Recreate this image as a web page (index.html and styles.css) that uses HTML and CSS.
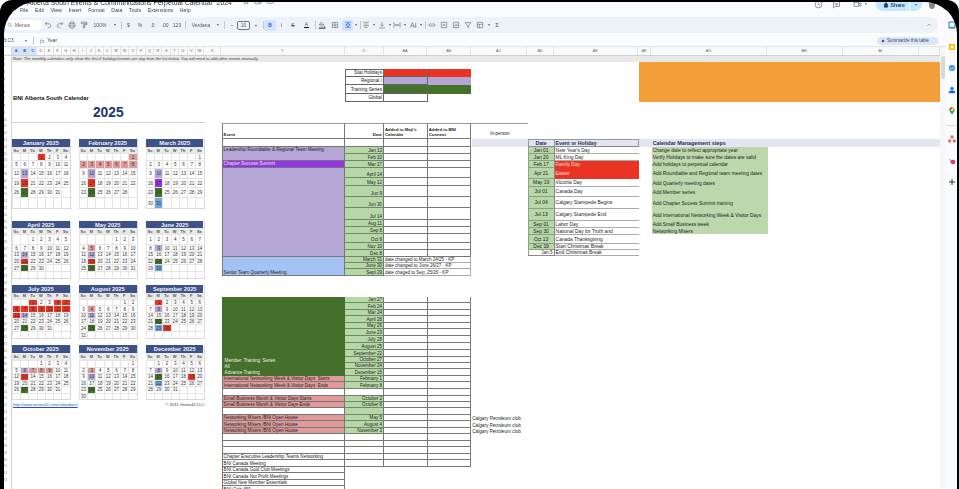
FILE: index.html
```html
<!DOCTYPE html>
<html lang="en">
<head>
<meta charset="utf-8">
<title>Alberta South Events &amp; Communications Perpetual Calendar 2024</title>
<link rel="stylesheet" href="styles.css">
</head>
<body>
<div class="screen">
<div class="app">
  <div class="workspace">
    <header class="top">
      <div class="top-left">
        <div class="doc-title">
          <span class="doc-name">Alberta South Events &amp; Communications Perpetual Calendar&nbsp; 2024</span>
          <svg class="ti" viewBox="0 0 24 24"><path d="M12 3l3 6 6 1-4.500 4.500 1 6.500-5.500-3-5.500 3 1-6.500L3 10l6-1z"/></svg>
          <svg class="ti" viewBox="0 0 24 24"><path d="M3 7h7l2 2h9v11H3zM12 15h5M15 12l3 3-3 3"/></svg>
          <svg class="ti" viewBox="0 0 24 24"><path d="M7 19a5 5 0 0 1 0-10 6 6 0 0 1 11 1 4.500 4.500 0 0 1 0 9z"/></svg>
        </div>
        <nav class="menus"><span>File</span><span>Edit</span><span>View</span><span>Insert</span><span>Format</span><span>Data</span><span>Tools</span><span>Extensions</span><span>Help</span></nav>
      </div>
      <div class="top-right">
        <svg class="ti big" viewBox="0 0 24 24"><circle cx="12" cy="12" r="9"/><path d="M12 7v5l4 2"/></svg>
        <svg class="ti big wider" viewBox="0 0 24 24"><path d="M4 4h16v13H9l-5 4zM8 9h8M8 13h8"/></svg>
        <svg class="ti big meet" viewBox="0 0 24 24"><path d="M3 7h12v10H3zM15 11l6-4v10l-6-4"/></svg>
        <i class="caret"></i>
        <div class="share">
          <svg class="lock" viewBox="0 0 24 24"><path d="M5 10h14v11H5zM8 10V7a4 4 0 0 1 8 0v3"/></svg>
          <span class="share-label">Share</span><i class="share-div"></i><i class="caret"></i>
        </div>
        <i class="avatar"></i>
      </div>
    </header>

    <div class="toolbar">
      <div class="search"><svg class="ti" viewBox="0 0 24 24"><circle cx="10" cy="10" r="6"/><path d="M15 15l6 6"/></svg><span>Menus</span></div>
      <span class="t w12"><svg class="ti" viewBox="0 0 24 24"><path d="M9 13L4 8l5-5M4 8h10a6 6 0 0 1 0 12h-3"/></svg></span>
      <span class="t w12"><svg class="ti" viewBox="0 0 24 24"><path d="M15 13l5-5-5-5M20 8H10a6 6 0 0 0 0 12h3"/></svg></span>
      <span class="t w12"><svg class="ti" viewBox="0 0 24 24"><path d="M7 8V3h10v5M7 17H3V8h18v9h-4M7 13h10v8H7z"/></svg></span>
      <span class="t w11"><svg class="ti" viewBox="0 0 24 24"><path d="M4 3h14v5H4zM18 5h3v6h-9v3M10 14h4v7h-4z"/></svg></span>
      <span class="t w22">100%</span><span class="t w8"><i class="caret"></i></span>
      <span class="t w4"><i class="sep"></i></span>
      <span class="t w11">$</span><span class="t w12">%</span><span class="t w13">.0</span><span class="t w12">.00</span><span class="t w12">123</span>
      <span class="t w4"><i class="sep"></i></span>
      <span class="t w28">Verdana</span><span class="t w6"><i class="caret"></i></span>
      <span class="t w6"><i class="sep"></i></span>
      <span class="t w10">−</span><span class="t w13"><span class="size">10</span></span><span class="t w12">+</span>
      <span class="t w2"><i class="sep"></i></span>
      <span class="t w12 on"><b>B</b></span><span class="t w11"><em>I</em></span><span class="t w12"><s>S</s></span><span class="t w15"><span class="color-a">A</span></span>
      <span class="t w2"><i class="sep"></i></span>
      <span class="t w12"><svg class="ti" viewBox="0 0 24 24"><path d="M10 3l8 8-7 7-7-7zM4 11h14M20 15l1.500 3a1.500 1.500 0 1 1-3 0z"/><path class="ink" d="M2 20h20v3H2z"/></svg></span>
      <span class="t w14"><svg class="ti" viewBox="0 0 24 24"><path d="M4 4h16v16H4zM12 4v16M4 12h16"/></svg></span>
      <span class="t w11 on"><svg class="ti blue" viewBox="0 0 24 24"><path d="M4 4h7v5M20 4h-7v5M4 20h7v-5M20 20h-7v-5M4 12h6M20 12h-6M7 9l3 3-3 3M17 9l-3 3 3 3"/></svg></span><span class="t w6"><i class="caret"></i></span>
      <span class="t w2"><i class="sep"></i></span>
      <span class="t w10"><svg class="ti" viewBox="0 0 24 24"><path d="M3 4h18M7 9h10M3 14h18M7 19h10"/></svg></span><span class="t w6"><i class="caret"></i></span>
      <span class="t w10"><svg class="ti" viewBox="0 0 24 24"><path d="M3 21h18M12 3v13M7 11l5 5 5-5"/></svg></span><span class="t w5"><i class="caret"></i></span>
      <span class="t w10"><svg class="ti" viewBox="0 0 24 24"><path d="M3 4v16M21 4v16M7 12h10M10 9l-3 3 3 3M14 9l3 3-3 3"/></svg></span><span class="t w5"><i class="caret"></i></span>
      <span class="t w11"><svg class="ti" viewBox="0 0 24 24"><path d="M4 20L10 5l6 15M6 15h8M20 5v13M18 16l2 3 2-3"/></svg></span><span class="t w6"><i class="caret"></i></span>
      <span class="t w2"><i class="sep"></i></span>
      <span class="t w12"><svg class="ti" viewBox="0 0 24 24"><path d="M10 8H7a4 4 0 0 0 0 8h3M14 8h3a4 4 0 0 1 0 8h-3M8 12h8"/></svg></span>
      <span class="t w12"><svg class="ti" viewBox="0 0 24 24"><path d="M4 4h16v16H4zM12 8v8M8 12h8"/></svg></span>
      <span class="t w12"><svg class="ti" viewBox="0 0 24 24"><path d="M4 4h16v16H4zM8 16v-4M12 16V8M16 16v-6"/></svg></span>
      <span class="t w12"><svg class="ti" viewBox="0 0 24 24"><path d="M3 5h18l-7 8v7l-4-2v-5z"/></svg></span>
      <span class="t w12"><svg class="ti" viewBox="0 0 24 24"><path d="M4 4h16v16H4zM4 10h16M10 10v10"/></svg></span><span class="t w5"><i class="caret"></i></span>
      <span class="t w12 sigma">Σ</span>
      <span class="chev"><svg class="ti" viewBox="0 0 24 24"><path d="M5 15l7-7 7 7"/></svg></span>
    </div>

    <div class="formula">
      <span class="namebox">B:C3</span><i class="caret"></i><i class="sep"></i><em class="fx">fx</em><span class="fval">Year</span>
      <span class="summarize"><svg class="spark" viewBox="0 0 24 24"><path d="M12 1l3 8 8 3-8 3-3 8-3-8-8-3 8-3z"/></svg>Summarize this table</span>
    </div>

    <div class="sheet-wrap">
      <div class="rows">
        <span class="corner"></span>
        <span>1</span><span>2</span><span>3</span><span>4</span><span>5</span><span>6</span><span>7</span><span>8</span><span>9</span><span>10</span><span>11</span><span>12</span><span>13</span><span>14</span><span>15</span><span>16</span><span>17</span><span>18</span><span>19</span><span>20</span><span>21</span><span>22</span><span>23</span><span>24</span><span>25</span><span>26</span><span>27</span><span>28</span><span>29</span><span>30</span><span>31</span><span>32</span><span>33</span><span>34</span><span>35</span><span>36</span><span>37</span><span>38</span><span>39</span><span>40</span><span>41</span><span>42</span><span>43</span><span>44</span><span>45</span><span>46</span><span>47</span><span>48</span><span>49</span><span>50</span><span>51</span><span>52</span><span>53</span><span>54</span><span>55</span><span>56</span><span>57</span><span>58</span><span>59</span><span>60</span><span>61</span><span>62</span><span>63</span>
      </div>
      <div class="main">
        <div class="cols">
          <span class="c hot">A</span><span class="c hot">B</span><span class="c hot">C</span><span class="c">D</span><span class="c">E</span><span class="c">F</span><span class="c">G</span><span class="c">H</span><span class="c">I</span><span class="c">J</span><span class="c">K</span><span class="c">L</span><span class="c">M</span><span class="c">N</span><span class="c">O</span><span class="c">P</span><span class="c">Q</span><span class="c">R</span><span class="c">S</span><span class="c">T</span><span class="c">U</span><span class="c">V</span><span class="c">W</span>
          <span class="c cx">X</span><span class="c cy">Y</span><span class="c cz">Z</span><span class="c caa">AA</span><span class="c cab">AB</span><span class="c cac">AC</span><span class="c cad">AD</span><span class="c cae">AE</span><span class="c caf">AF</span><span class="c cag">AG</span><span class="c cah">AH</span><span class="c cai">AI</span><span class="c clast"></span>
        </div>
        <div class="note">Note: The monthly calendars only show the first 2 holidays/events per day from the list below. You will need to add other events manually.</div>

        <div class="sheet">
          <section class="months">
            <div class="brand">BNI Alberta South Calendar</div>
            <div class="year">2025</div>

            <div class="quarter q1">
              <div class="cal"><h3>January 2025</h3>
                <b>Su</b><b>M</b><b>Tu</b><b>W</b><b>Th</b><b>F</b><b>Sa</b>
                <i></i><i></i><i></i><i class="r">1</i><i>2</i><i>3</i><i>4</i>
                <i>5</i><i>6</i><i>7</i><i>8</i><i>9</i><i>10</i><i>11</i>
                <i>12</i><i class="v">13</i><i>14</i><i>15</i><i>16</i><i>17</i><i>18</i>
                <i>19</i><i class="r">20</i><i>21</i><i>22</i><i>23</i><i>24</i><i>25</i>
                <i>26</i><i class="g">27</i><i>28</i><i>29</i><i>30</i><i>31</i><i></i>
                <i></i><i></i><i></i><i></i><i></i><i></i><i></i>
              </div>
              <div class="cal"><h3>February 2025</h3>
                <b>Su</b><b>M</b><b>Tu</b><b>W</b><b>Th</b><b>F</b><b>Sa</b>
                <i></i><i></i><i></i><i></i><i></i><i></i><i class="p">1</i>
                <i class="p">2</i><i class="p">3</i><i class="p">4</i><i class="p">5</i><i class="p">6</i><i class="p">7</i><i class="p">8</i>
                <i>9</i><i class="v">10</i><i>11</i><i>12</i><i>13</i><i>14</i><i>15</i>
                <i>16</i><i class="r">17</i><i>18</i><i>19</i><i>20</i><i>21</i><i>22</i>
                <i>23</i><i class="g">24</i><i>25</i><i>26</i><i>27</i><i>28</i><i></i>
                <i></i><i></i><i></i><i></i><i></i><i></i><i></i>
              </div>
              <div class="cal"><h3>March 2025</h3>
                <b>Su</b><b>M</b><b>Tu</b><b>W</b><b>Th</b><b>F</b><b>Sa</b>
                <i></i><i></i><i></i><i></i><i></i><i></i><i>1</i>
                <i>2</i><i>3</i><i>4</i><i>5</i><i>6</i><i>7</i><i>8</i>
                <i>9</i><i class="v">10</i><i>11</i><i>12</i><i>13</i><i>14</i><i>15</i>
                <i>16</i><i class="m">17</i><i>18</i><i>19</i><i>20</i><i>21</i><i>22</i>
                <i>23</i><i class="g">24</i><i>25</i><i>26</i><i>27</i><i>28</i><i>29</i>
                <i>30</i><i class="bl">31</i><i></i><i></i><i></i><i></i><i></i>
              </div>
            </div>

            <div class="quarter q2">
              <div class="cal"><h3>April 2025</h3>
                <b>Su</b><b>M</b><b>Tu</b><b>W</b><b>Th</b><b>F</b><b>Sa</b>
                <i></i><i></i><i>1</i><i>2</i><i>3</i><i>4</i><i>5</i>
                <i>6</i><i>7</i><i>8</i><i>9</i><i>10</i><i>11</i><i>12</i>
                <i>13</i><i class="v">14</i><i>15</i><i>16</i><i>17</i><i>18</i><i>19</i>
                <i>20</i><i class="r">21</i><i>22</i><i>23</i><i>24</i><i>25</i><i>26</i>
                <i>27</i><i class="g">28</i><i>29</i><i>30</i><i></i><i></i><i></i>
                <i></i><i></i><i></i><i></i><i></i><i></i><i></i>
              </div>
              <div class="cal"><h3>May 2025</h3>
                <b>Su</b><b>M</b><b>Tu</b><b>W</b><b>Th</b><b>F</b><b>Sa</b>
                <i></i><i></i><i></i><i></i><i>1</i><i>2</i><i>3</i>
                <i>4</i><i class="p">5</i><i>6</i><i>7</i><i>8</i><i>9</i><i>10</i>
                <i>11</i><i class="v">12</i><i>13</i><i>14</i><i>15</i><i>16</i><i>17</i>
                <i>18</i><i class="r">19</i><i>20</i><i>21</i><i>22</i><i>23</i><i>24</i>
                <i>25</i><i class="g">26</i><i>27</i><i>28</i><i>29</i><i>30</i><i>31</i>
                <i></i><i></i><i></i><i></i><i></i><i></i><i></i>
              </div>
              <div class="cal"><h3>June 2025</h3>
                <b>Su</b><b>M</b><b>Tu</b><b>W</b><b>Th</b><b>F</b><b>Sa</b>
                <i>1</i><i>2</i><i>3</i><i>4</i><i>5</i><i>6</i><i>7</i>
                <i>8</i><i class="v">9</i><i>10</i><i>11</i><i>12</i><i>13</i><i>14</i>
                <i>15</i><i>16</i><i>17</i><i>18</i><i>19</i><i>20</i><i>21</i>
                <i>22</i><i class="g">23</i><i>24</i><i>25</i><i>26</i><i>27</i><i>28</i>
                <i>29</i><i class="bl">30</i><i></i><i></i><i></i><i></i><i></i>
                <i></i><i></i><i></i><i></i><i></i><i></i><i></i>
              </div>
            </div>

            <div class="quarter q3">
              <div class="cal"><h3>July 2025</h3>
                <b>Su</b><b>M</b><b>Tu</b><b>W</b><b>Th</b><b>F</b><b>Sa</b>
                <i></i><i></i><i class="r">1</i><i>2</i><i>3</i><i class="r">4</i><i class="r">5</i>
                <i class="r">6</i><i class="r">7</i><i class="r">8</i><i class="r">9</i><i class="r">10</i><i class="r">11</i><i class="r">12</i>
                <i class="r">13</i><i class="v">14</i><i>15</i><i>16</i><i>17</i><i>18</i><i>19</i>
                <i>20</i><i>21</i><i>22</i><i>23</i><i>24</i><i>25</i><i>26</i>
                <i>27</i><i class="g">28</i><i>29</i><i>30</i><i>31</i><i></i><i></i>
                <i></i><i></i><i></i><i></i><i></i><i></i><i></i>
              </div>
              <div class="cal"><h3>August 2025</h3>
                <b>Su</b><b>M</b><b>Tu</b><b>W</b><b>Th</b><b>F</b><b>Sa</b>
                <i></i><i></i><i></i><i></i><i></i><i>1</i><i>2</i>
                <i>3</i><i class="p">4</i><i>5</i><i>6</i><i>7</i><i>8</i><i>9</i>
                <i>10</i><i class="v">11</i><i>12</i><i>13</i><i>14</i><i>15</i><i>16</i>
                <i>17</i><i>18</i><i>19</i><i>20</i><i>21</i><i>22</i><i>23</i>
                <i>24</i><i class="g">25</i><i>26</i><i>27</i><i>28</i><i>29</i><i>30</i>
                <i>31</i><i></i><i></i><i></i><i></i><i></i><i></i>
              </div>
              <div class="cal"><h3>September 2025</h3>
                <b>Su</b><b>M</b><b>Tu</b><b>W</b><b>Th</b><b>F</b><b>Sa</b>
                <i></i><i class="r">1</i><i>2</i><i>3</i><i>4</i><i>5</i><i>6</i>
                <i>7</i><i class="v">8</i><i>9</i><i>10</i><i>11</i><i>12</i><i>13</i>
                <i>14</i><i>15</i><i>16</i><i>17</i><i>18</i><i>19</i><i>20</i>
                <i>21</i><i class="g">22</i><i>23</i><i>24</i><i>25</i><i>26</i><i>27</i>
                <i>28</i><i class="bl">29</i><i class="r">30</i><i></i><i></i><i></i><i></i>
                <i></i><i></i><i></i><i></i><i></i><i></i><i></i>
              </div>
            </div>

            <div class="quarter q4">
              <div class="cal"><h3>October 2025</h3>
                <b>Su</b><b>M</b><b>Tu</b><b>W</b><b>Th</b><b>F</b><b>Sa</b>
                <i></i><i></i><i></i><i>1</i><i>2</i><i>3</i><i>4</i>
                <i>5</i><i class="v">6</i><i class="p">7</i><i class="p">8</i><i class="p">9</i><i>10</i><i>11</i>
                <i>12</i><i class="r">13</i><i>14</i><i>15</i><i>16</i><i>17</i><i>18</i>
                <i>19</i><i>20</i><i>21</i><i>22</i><i>23</i><i>24</i><i>25</i>
                <i>26</i><i class="g">27</i><i>28</i><i>29</i><i>30</i><i>31</i><i></i>
                <i></i><i></i><i></i><i></i><i></i><i></i><i></i>
              </div>
              <div class="cal"><h3>November 2025</h3>
                <b>Su</b><b>M</b><b>Tu</b><b>W</b><b>Th</b><b>F</b><b>Sa</b>
                <i></i><i></i><i></i><i></i><i></i><i></i><i>1</i>
                <i>2</i><i class="p">3</i><i>4</i><i>5</i><i>6</i><i>7</i><i>8</i>
                <i>9</i><i class="v">10</i><i>11</i><i>12</i><i>13</i><i>14</i><i>15</i>
                <i>16</i><i>17</i><i>18</i><i>19</i><i>20</i><i>21</i><i>22</i>
                <i>23</i><i class="g">24</i><i>25</i><i>26</i><i>27</i><i>28</i><i>29</i>
                <i>30</i><i></i><i></i><i></i><i></i><i></i><i></i>
              </div>
              <div class="cal"><h3>December 2025</h3>
                <b>Su</b><b>M</b><b>Tu</b><b>W</b><b>Th</b><b>F</b><b>Sa</b>
                <i></i><i>1</i><i>2</i><i>3</i><i>4</i><i>5</i><i>6</i>
                <i>7</i><i class="v">8</i><i>9</i><i>10</i><i>11</i><i>12</i><i>13</i>
                <i>14</i><i class="g">15</i><i>16</i><i>17</i><i>18</i><i class="r">19</i><i>20</i>
                <i>21</i><i class="bl">22</i><i>23</i><i>24</i><i>25</i><i>26</i><i>27</i>
                <i>28</i><i>29</i><i>30</i><i>31</i><i></i><i></i><i></i>
                <i></i><i></i><i></i><i></i><i></i><i></i><i></i>
              </div>
            </div>

            <div class="cal-foot"><a href="#">http://www.vertex42.com/calendars/</a><span>© 2011 Vertex42 LLC</span></div>
          </section>

          <section class="events">
            <div class="legend">
              <span class="lab">Stat Holidays</span><span class="swatch sw-r"></span><span class="swatch-b sw-r"></span>
              <span class="lab">Regional /</span><span class="swatch sw-v"></span><span class="swatch-b sw-v"></span>
              <span class="lab">Training Series</span><span class="swatch sw-g"></span><span class="swatch-b sw-g"></span>
              <span class="lab">Global</span><span class="swatch"></span><span></span>
            </div>

            <div class="etable et1">
              <span class="ec hd bold">Event</span><span class="dc hd bold plain">Date</span><span class="nc hd bold">Added to Maji's Calendar</span><span class="nc hd bold">Added to BNI Connect</span><span class="ac hd">In-person</span>
              <span class="ec"></span><span class="dc plain"></span><span class="nc"></span><span class="nc"></span><span></span>

              <span class="ec lav top-al s2">Leadership Roundtable &amp; Regional Team Meeting</span><span class="dc">Jan 13</span><span class="nc"></span><span class="nc"></span><span></span>
              <span class="dc">Feb 10</span><span class="nc"></span><span class="nc"></span><span></span>
              <span class="ec vio mid">Chapter Success Summit</span><span class="dc">Mar 17</span><span class="nc"></span><span class="nc"></span><span></span>
              <span class="ec lav s10"></span><span class="dc">April 14</span><span class="nc"></span><span class="nc"></span><span></span>
              <span class="dc">May 12</span><span class="nc"></span><span class="nc"></span><span></span>
              <span class="dc">Jun 9</span><span class="nc"></span><span class="nc"></span><span></span>
              <span class="dc">Jun 30</span><span class="nc"></span><span class="nc"></span><span></span>
              <span class="dc">Jul 14</span><span class="nc"></span><span class="nc"></span><span></span>
              <span class="dc">Aug 11</span><span class="nc"></span><span class="nc"></span><span></span>
              <span class="dc">Sep 8</span><span class="nc"></span><span class="nc"></span><span></span>
              <span class="dc">Oct 6</span><span class="nc"></span><span class="nc"></span><span></span>
              <span class="dc">Nov 10</span><span class="nc"></span><span class="nc"></span><span></span>
              <span class="dc">Dec 8</span><span class="nc"></span><span class="nc"></span><span></span>
              <span class="ec sky s3">Senior Team Quarterly Meeting</span><span class="dc">March 31</span><span class="nc wide">date changed to March 24/25 - KP</span><span></span>
              <span class="dc">June 30</span><span class="nc wide">date changed to June 26/27 - KP</span><span></span>
              <span class="dc">Sept 29</span><span class="nc wide">date chaged to Sep; 25/26 - KP</span><span></span>
            </div>

            <div class="etable et2">
              <span class="ec forest s12">Member&nbsp; Training&nbsp; Series<br>All<br>Advance Training</span><span class="dc">Jan 27</span><span class="nc"></span><span class="nc"></span><span></span>
              <span class="dc">Feb 24</span><span class="nc"></span><span class="nc"></span><span></span>
              <span class="dc">Mar 24</span><span class="nc"></span><span class="nc"></span><span></span>
              <span class="dc">April 28</span><span class="nc"></span><span class="nc"></span><span></span>
              <span class="dc">May 26</span><span class="nc"></span><span class="nc"></span><span></span>
              <span class="dc">June 23</span><span class="nc"></span><span class="nc"></span><span></span>
              <span class="dc">July 28</span><span class="nc"></span><span class="nc"></span><span></span>
              <span class="dc">August 25</span><span class="nc"></span><span class="nc"></span><span></span>
              <span class="dc">September 22</span><span class="nc"></span><span class="nc"></span><span></span>
              <span class="dc">October 27</span><span class="nc"></span><span class="nc"></span><span></span>
              <span class="dc">November 24</span><span class="nc"></span><span class="nc"></span><span></span>
              <span class="dc">December 15</span><span class="nc"></span><span class="nc"></span><span></span>
              <span class="ec rose">International Networking Week &amp; Visitor Days&nbsp; Starts</span><span class="dc">February 1</span><span class="nc"></span><span class="nc"></span><span></span>
              <span class="ec rose">International Networking Week &amp; Visitor Days&nbsp; Ends</span><span class="dc">February 8</span><span class="nc"></span><span class="nc"></span><span></span>
              <span class="ec"></span><span class="dc plain"></span><span class="nc"></span><span class="nc"></span><span></span>
              <span class="ec rose">Small Business Month &amp; Visitor Days Starts</span><span class="dc">October 2</span><span class="nc"></span><span class="nc"></span><span></span>
              <span class="ec rose">Small Business Month &amp; Visitor Days Ends</span><span class="dc">October 8</span><span class="nc"></span><span class="nc"></span><span></span>
              <span class="ec"></span><span class="dc"></span><span class="nc"></span><span class="nc"></span><span></span>
              <span class="ec rose">Networking Mixers /BNI Open House</span><span class="dc">May 5</span><span class="nc"></span><span class="nc"></span><span class="ac">Calgary Petroleum club</span>
              <span class="ec rose">Networking Mixers /BNI Open House</span><span class="dc">August 4</span><span class="nc"></span><span class="nc"></span><span class="ac">Calgary Petroleum club</span>
              <span class="ec rose">Networking Mixers /BNI Open House</span><span class="dc">November 3</span><span class="nc"></span><span class="nc"></span><span class="ac">Calgary Petroleum club</span>
              <span class="ec"></span><span class="dc plain"></span><span class="nc"></span><span class="nc"></span><span></span>
              <span class="ec"></span><span class="dc plain"></span><span class="nc"></span><span class="nc"></span><span></span>
              <span class="ec"></span><span class="dc plain"></span><span class="nc"></span><span class="nc"></span><span></span>
              <span class="ec">Chapter Executive Leadership Teams Networking</span><span class="dc plain"></span><span class="nc"></span><span class="nc"></span><span></span>
              <span class="ec">BNI Canada Meeting</span><span class="dc plain"></span><span class="nc"></span><span class="nc"></span><span></span>
              <span class="ec row-only">BNI Canada Gold Club Meetings</span>
              <span class="ec row-only">BNI Canada Not Profit Meetings</span>
              <span class="ec row-only">Global New Member Essentials</span>
              <span class="ec row-only">BNI Club 450</span>
            </div>
          </section>

          <section class="holidays">
            <span class="hh">Date</span><span class="hh left">Event or Holiday</span>
            <span class="hd-date">Jan 01</span><span class="hd-name">New Year's Day</span>
            <span class="hd-date">Jan 20</span><span class="hd-name">ML King Day</span>
            <span class="hd-date">Feb 17</span><span class="hd-name red">Family Day</span>
            <span class="hd-date">Apr 21</span><span class="hd-name red">Easter</span>
            <span class="hd-date">May 19</span><span class="hd-name">Victoria Day</span>
            <span class="hd-date">Jul 01</span><span class="hd-name">Canada Day</span>
            <span class="hd-date">Jul 04</span><span class="hd-name">Calgary Stampede Begins</span>
            <span class="hd-date">Jul 13</span><span class="hd-name">Calgary Stampede End</span>
            <span class="hd-date">Sep 01</span><span class="hd-name">Labor Day</span>
            <span class="hd-date">Sep 30</span><span class="hd-name">National Day for Truth and</span>
            <span class="hd-date">Oct 13</span><span class="hd-name">Canada Thanksgiving</span>
            <span class="hd-date">Dec 19</span><span class="hd-name">Start Christmas Break</span>
            <span class="hd-date last">Jan 5</span><span class="hd-name">End Christmas Break</span>
          </section>

          <div class="orange"></div>

          <section class="steps">
            <span class="st-h">Calendar Management steps</span>
            <span>Change date to reflect appropriate year</span>
            <span>Verify Holidays to make sure the dates are valid</span>
            <span>Add holidays to perpetual calendar</span>
            <span>Add Roundtable and Regional team meeting dates</span>
            <span>Add Quarterly meeting dates</span>
            <span>Add Member series</span>
            <span>Add Chapter Sucess Summit training</span>
            <span>Add International Networking Week &amp; Visitor Days</span>
            <span>Add Small Business week</span>
            <span>Networking Mixers</span>
          </section>
        </div>
      </div>
      <div class="vbar"><i class="thumb"></i></div>
    </div>
  </div>

  <aside class="side">
    <svg viewBox="0 0 24 24"><path fill="#fff" stroke="#1a73e8" stroke-width="3" d="M3 3h18v18H3z"/><path fill="#34a853" d="M3 17h18v4H3z"/></svg>
    <svg viewBox="0 0 24 24"><path fill="#fbbc04" d="M3 3h18v18H3z"/><path fill="#fff" d="M8 8h8v8H8z"/></svg>
    <svg viewBox="0 0 24 24"><circle cx="12" cy="12" r="9" fill="#4285f4"/><path d="M7 12l4 4 6-7" fill="none" stroke="#fff" stroke-width="2.500"/></svg>
    <svg viewBox="0 0 24 24"><circle cx="12" cy="7" r="5" fill="#1a73e8"/><path fill="#1a5fd0" d="M2 22c0-7 5-9 10-9s10 2 10 9z"/></svg>
    <svg viewBox="0 0 24 24"><path fill="#34a853" d="M12 23C7 16 4 12 4 8.500A8 8 0 0 1 20 8.500C20 12 17 16 12 23z"/><path fill="#ea4335" d="M4 8.500A8 8 0 0 1 12 1v7z"/><path fill="#fbbc04" d="M12 1a8 8 0 0 1 8 7.500h-8z"/><circle cx="12" cy="9" r="3" fill="#fff"/></svg>
    <i class="side-line"></i>
    <svg viewBox="0 0 24 24"><circle cx="12" cy="6" r="5" fill="#f06a6a"/><circle cx="5" cy="18" r="5" fill="#f06a6a"/><circle cx="19" cy="18" r="5" fill="#f06a6a"/></svg>
    <svg viewBox="0 0 24 24"><path fill="#f48fb1" d="M2 3l12 9-6 6z"/><circle cx="15" cy="15" r="7" fill="#e8336d"/></svg>
    <svg viewBox="0 0 24 24"><path d="M12 3v18M3 12h18" fill="none" stroke="#333" stroke-width="3"/></svg>
  </aside>
</div>
<div class="bezel"></div>
</div>
</body>
</html>
```

FILE: styles.css
```css
* { box-sizing: border-box; }
html, body { margin: 0; padding: 0; background: #fff; }
body { width: 959px; height: 489px; overflow: hidden; font-family: "Liberation Sans", Arial, sans-serif; color: #222; }

.screen { position: relative; width: 959px; height: 489px; overflow: hidden; border-radius: 12px 12px 0 0; background: #000; filter: blur(.5px); }
.bezel { position: absolute; top: 1.500px; left: 3.500px; right: 2.500px; bottom: -40px; border-radius: 32px 32px 0 0; box-shadow: 0 0 0 40px #000; pointer-events: none; }

.app { display: flex; width: 959px; height: 489px; background: #f9fbfd; }
.workspace { width: 945px; flex: none; display: flex; flex-direction: column; }

.ti { width: 8px; height: 8px; fill: none; stroke: #5a5e5c; stroke-width: 1.700; flex: none; }
.ti.big { width: 9px; height: 9px; }
.ti.blue { stroke: #0b57d0; }
.ink { fill: #222; stroke: none; }
.caret { display: inline-block; width: 0; height: 0; border: 1.600px solid transparent; border-top: 2px solid #5a5e5c; border-bottom: 0; flex: none; }
.sep { display: block; width: 1px; height: 8px; background: #c7c7c7; flex: none; }

/* top */
.top { display: flex; height: 17px; flex: none; }
.top-left { flex: 1; display: flex; flex-direction: column; }
.doc-title { height: 7px; display: flex; align-items: center; padding-left: 27px; gap: 4px; color: #333; overflow: hidden; }
.doc-name { font-size: 6.900px; line-height: 7px; margin-top: -3px; margin-right: 6px; white-space: nowrap; }
.doc-title .ti { margin-top: -5px; }
.menus { display: flex; padding-left: 20px; gap: 6.700px; font-size: 5.200px; line-height: 8px; height: 10px; color: #444; margin-top: -1px; }
.top-right { display: flex; align-items: flex-start; width: 133px; padding-left: 1.500px; flex: none; }
.top-right .ti { margin-right: 9px; }
.top-right .wider { margin-right: 12px; }
.top-right .meet { margin-right: 3px; }
.top-right > .caret { margin: 3px 9px 0 0; }
.share { display: flex; align-items: center; width: 46px; height: 12px; margin-top: -1px; border-radius: 0 0 7px 7px; background: #c2e7ff; padding-left: 7px; font-size: 5.200px; font-weight: bold; color: #1f3a5a; }
.lock { width: 6px; height: 6px; fill: #1f3a5a; stroke: #1f3a5a; stroke-width: 2; margin-right: 2px; }
.share-label { width: 18px; }
.share-div { width: 1px; height: 12px; background: #f9fbfd; margin-right: 5px; }
.avatar { display: block; width: 6px; height: 8px; margin: 1px 0 0 7px; background: #888; border-radius: 50%; }

/* toolbar */
.toolbar { display: flex; align-items: center; height: 16px; flex: none; margin-right: 7px; padding-left: 5px; background: #edf2fa; border-radius: 8px; font-size: 5px; color: #555; }
.search { display: flex; align-items: center; width: 37px; height: 10px; background: #fff; border-radius: 5px; padding-left: 2px; gap: 2px; font-size: 5px; }
.search .ti { width: 6px; height: 6px; }
.t { display: flex; align-items: center; justify-content: center; height: 11px; flex: none; border-radius: 2px; }
.w2 { width: 2px; } .w4 { width: 4px; } .w5 { width: 5px; } .w6 { width: 6px; } .w8 { width: 8px; } .w10 { width: 10px; } .w11 { width: 11px; } .w12 { width: 12px; } .w13 { width: 13px; } .w14 { width: 14px; } .w15 { width: 15px; } .w22 { width: 22px; } .w28 { width: 28px; }
.on { background: #d3e3fd; color: #0b57d0; }
.size { display: flex; align-items: center; justify-content: center; width: 13px; height: 9px; border: 1px solid #747775; border-radius: 2px; }
.color-a { border-bottom: 1.500px solid #111; line-height: 5px; padding: 0 1px; }
.sigma { font-size: 6px; }
.chev { margin-left: auto; margin-right: 6px; display: flex; }
.chev .ti { width: 6px; height: 6px; }

/* formula */
.formula { display: flex; align-items: center; height: 13px; flex: none; padding: 2.500px 7px 0 3px; font-size: 4.800px; color: #555; }
.namebox { width: 22px; }
.formula .sep { margin: 0 6px; }
.fx { font-family: "Liberation Serif", serif; font-size: 6px; margin-right: 3px; color: #777; }
.fval { color: #444; }
.summarize { display: flex; align-items: center; margin-left: auto; width: 61px; height: 8px; padding-left: 4px; gap: 2px; border-radius: 4px; background: #d9e5fa; font-size: 4.500px; white-space: nowrap; color: #444; }
.spark { width: 4px; height: 4px; fill: #111; }

/* sheet chrome */
.sheet-wrap { flex: 1; min-height: 0; display: flex; background: #fff; border-top: 1px solid #e1e3e1; }
.rows { width: 12px; flex: none; display: flex; flex-direction: column; padding-left: 3.500px; border-right: 1px solid #d5d5d5; background: #fff; overflow: hidden; font-size: 3.200px; color: #888; }
.rows span { flex: none; height: 6.800px; line-height: 6.800px; }
.rows .corner { height: 8.500px; border-bottom: 1px solid #cfcfcf; }
.main { width: 928px; flex: none; display: flex; flex-direction: column; height: 442px; overflow: hidden; }
.vbar { width: 5px; flex: none; background: #f6f7f8; padding-top: 8.500px; }
.thumb { display: block; width: 4px; height: 23px; margin-left: 1px; background: #d6d8da; border-radius: 2px; }

.cols { display: flex; height: 8.500px; flex: none; background: #f8f9fa; border-bottom: 1px solid #cfcfcf; font-size: 3.800px; color: #666; }
.c { width: 8.370px; flex: none; display: flex; align-items: center; justify-content: center; border-right: 1px solid #e3e3e3; }
.c.hot { background: #d3e3fd; color: #0b57d0; font-weight: bold; border-right: 0; }
.cx { width: 17.100px; } .cy { width: 123.400px; } .cz { width: 39px; } .caa { width: 43.700px; } .cab { width: 43.500px; } .cac { width: 56.400px; } .cad { width: 26.400px; } .cae { width: 84px; } .caf { width: 13.700px; } .cag { width: 115.300px; } .cah { width: 76px; } .cai { width: 76px; } .clast { width: 21px; }
.note { height: 6.500px; flex: none; line-height: 6.500px; padding-left: 1px; background: #e9e9e9; font-size: 4.050px; font-style: italic; white-space: nowrap; color: #333; }

/* sheet grid */
.sheet { flex: 1; min-height: 0; display: grid; grid-template-columns: 209.600px 306px 111.400px 12.700px 116.300px 172px; grid-template-rows: 77px 1fr; overflow: hidden; background: #fff linear-gradient(#e3e6f1, #e3e6f1) no-repeat 460px 77px / 468px 8px; }

.months { grid-column: 1; grid-row: 1 / 3; }
.brand { margin-top: 33px; height: 6px; line-height: 6px; padding-left: 1px; font-size: 5.800px; font-weight: bold; color: #111; white-space: nowrap; }
.year { width: 192.500px; height: 22px; padding-top: 2px; line-height: 20px; text-align: center; font-size: 13.800px; font-weight: bold; color: #243568; border-bottom: 1px solid #cfcfcf; }

.quarter { display: flex; gap: 8.370px; }
.cal { display: grid; width: 58.600px; grid-template-columns: repeat(7, 1fr); border-right: 1px solid #d9d9d9; border-bottom: 1px solid #d9d9d9; font-size: 4.500px; text-align: center; color: #333; }
.cal h3 { grid-column: 1 / -1; margin: 0; background: #3d5288; color: #f0f2f8; font-size: 5.700px; font-weight: bold; display: flex; align-items: center; justify-content: center; white-space: nowrap; }
.cal b { display: flex; align-items: center; justify-content: center; background: #e9e9e9; font-weight: bold; font-size: 3.900px; color: #555; }
.cal i { display: flex; align-items: center; justify-content: center; font-style: normal; border-left: 1px solid #e4e4e4; border-top: 1px solid #e4e4e4; }
.q1 { margin-top: 16px; }
.q1 .cal { grid-template-rows: 8px 6px 7px 8px 10px 9px 10px 11px; }
.q2 { margin-top: 12px; }
.q2 .cal { grid-template-rows: 7px 6px 10px 7px 6.500px 6.500px 7px 7px; }
.q3 { margin-top: 6px; }
.q3 .cal { grid-template-rows: 7.500px 6.500px 6px 7px 6px 6px 7px 7px; }
.q4 { margin-top: 6px; }
.q4 .cal { grid-template-rows: 7.500px 7.500px 6.500px 6.500px 6.500px 6.500px 6.500px 6.500px; }
.cal .r { background: #ea3323; }
.cal .p { background: #df9a9a; }
.cal .v { background: #b4a7d6; }
.cal .m { background: #9334e6; }
.cal .g { background: #45722a; }
.cal .bl { background: #6fa8dc; }
.cal-foot { display: flex; justify-content: space-between; width: 192.500px; margin-top: 2px; padding-left: 1px; font-size: 4.100px; line-height: 5px; color: #333; white-space: nowrap; }
.cal-foot a { color: #1155cc; }

/* events */
.events { grid-column: 2; grid-row: 1 / 3; font-size: 4.550px; }
.legend { display: grid; grid-template-columns: 39px 43.700px 43.500px; grid-template-rows: repeat(4, 8.200px); margin: 7px 0 0 123.400px; }
.lab { display: flex; align-items: flex-end; justify-content: flex-end; padding-right: 1px; border: 1px solid #666; border-top-width: 0; background: #fff; overflow: hidden; font-size: 4.700px; line-height: 6px; white-space: nowrap; }
.legend .lab:first-child { border-top-width: 1px; }
.swatch { border: 1px solid #666; border-left: 0; border-top: 0; }
.sw-r { background: #ea3323; }
.sw-v { background: #b4a7d6; }
.sw-g { background: #45722a; }

.etable { display: grid; grid-template-columns: 123.400px 39px 43.700px 43.500px 56.400px; white-space: nowrap; }
.et1 { margin-top: 21px; grid-template-rows: 16px 8px 7px 7px 7px 10px 8px 11px 11px 12px 7px 7px 9px 7px 7px 6px 6.500px 6.500px; }
.et2 { margin-top: 21px; grid-template-rows: 6.500px 6.500px 6.500px 6.500px 6.500px 6.500px 7px 7.500px 6.500px 6.500px 6px 6.500px 6.500px 6.500px 7px 6px 6px 7px 6.500px 6.500px 6.500px 6.500px 6.500px 6.500px 6.500px 6.500px 6.500px 6.500px 6.500px 6.500px; }
.etable > span { min-width: 0; overflow: hidden; display: flex; align-items: flex-end; }
.ec { padding-left: 1px; border: 1px solid #777; border-top: 0; color: #222; }
.et1 .hd { border-top: 1px solid #999; }
.dc { justify-content: flex-end; padding-right: 1px; background: #b6d7a8; border-right: 1px solid #777; border-bottom: 1px solid #6f8a63; color: #222; }
.dc.plain { background: #fff; border-bottom-color: #777; }
.nc { border-right: 1px solid #777; border-bottom: 1px solid #777; padding-left: 1px; background: #fff; }
.nc.wide { grid-column: span 2; border-right-color: #aaa; border-bottom-color: #aaa; }
.hd { font-size: 4.300px; line-height: 5.500px; white-space: normal; }
.bold { font-weight: bold; }
.etable > .ac { overflow: visible; padding-left: 1px; color: #222; }
.etable > .ac.hd { justify-content: center; font-size: 4.600px; padding-bottom: 2px; }
.et2 > .ac { font-size: 4.700px; }
.etable > .top-al { align-items: flex-start; }
.etable > .mid { align-items: center; }
.lav { background: #b4a7d6; }
.vio { background: #9334e6; color: #f3e9ff; }
.sky { background: #a4c2f4; }
.etable > .forest { background: #45702b; color: #eef3e8; display: block; padding-top: 61.500px; line-height: 5.700px; padding-left: 2px; border-color: #45702b; }
.rose { background: #e09a9a; }
.s2 { grid-row: span 2; } .s3 { grid-row: span 3; } .s10 { grid-row: span 10; } .s12 { grid-row: span 12; }
.row-only { grid-column: 1; }

/* holidays */
.holidays { grid-column: 3; grid-row: 2; display: grid; grid-template-columns: 27px 84px; grid-template-rows: 8px 7px 7px 7px 11px 8px 10px 12px 12px 7px 7px 9px 6px 6px; width: 111px; font-size: 4.900px; color: #222; white-space: nowrap; border-right: 1px solid #999; align-self: start; }
.holidays span { display: flex; align-items: center; overflow: hidden; }
.hh { background: #e3e6f1; justify-content: center; font-weight: bold; font-size: 5.200px; color: #1f2a58; border: 1px solid #999; border-bottom: 1px solid #888; }
.hh.left { justify-content: flex-start; padding-left: 1px; border-left: 0; }
.hd-date { justify-content: center; background: #b6d7a8; border-left: 1px solid #999; border-right: 1.500px solid #888; border-bottom: 1px solid #8aa37d; }
.hd-date.last { background: #fff; justify-content: flex-end; padding-right: 1px; border-right: 1px solid #888; border-bottom-color: #888; font-size: 4.600px; }
.hd-name { padding-left: 1px; background: #fff; border-bottom: 1px solid #aaa; }
.hd-name.red { background: #ea3323; color: #fbe3df; border-bottom: 0; }

.orange { grid-column: 4 / 7; grid-row: 1; height: 40px; background: #f29f39; }

/* steps */
.steps { grid-column: 5; grid-row: 2; display: grid; grid-template-rows: 8px 7px 7px 7px 11px 8px 10px 12px 12px 7px 6px; width: 116.300px; font-size: 4.900px; white-space: nowrap; align-self: start; }
.steps span { display: flex; align-items: center; padding-left: 1px; background: #bcd7ab; color: #222; overflow: hidden; }
.steps .st-h { background: transparent; font-size: 5.400px; font-weight: bold; color: #1f2a58; }

/* side */
.side { width: 14px; flex: none; display: flex; flex-direction: column; align-items: center; gap: 13.500px; padding-top: 21px; background: #f9fbfd; }
.side svg { width: 8px; height: 8px; flex: none; }
.side-line { display: block; width: 10px; height: 1px; background: #dadce0; margin: -4px 0; }
```
